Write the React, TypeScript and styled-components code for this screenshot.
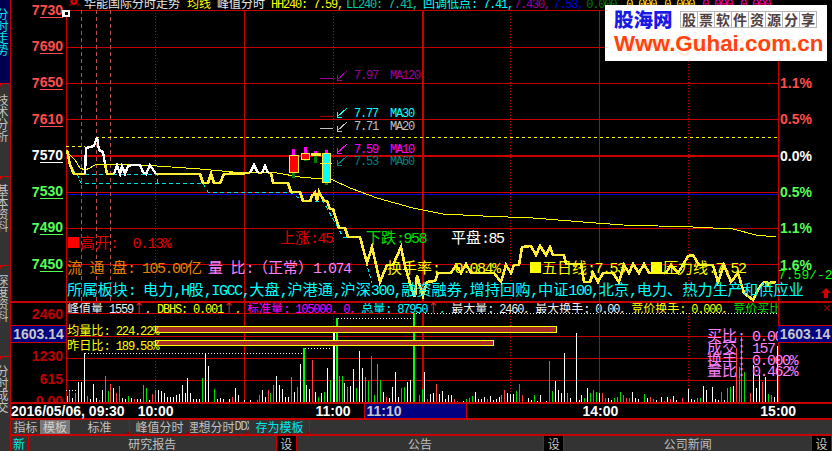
import React from "react";
import styled, { createGlobalStyle } from "styled-components";

const RED = "#c80000";
const CJK = '"Noto Sans CJK SC", "Liberation Sans", sans-serif';

const Global = createGlobalStyle`
  html, body { margin: 0; padding: 0; background: #000; }
  #root { width: 832px; height: 451px; overflow: hidden; }
`;

const Root = styled.div`
  position: relative;
  width: 832px;
  height: 451px;
  display: flex;
  overflow: hidden;
  background: #000;
  font-family: ${CJK};
  color: #fff;
`;

/* ---------- mixed width text: ASCII is half of the CJK em ---------- */
const LatinRun = styled.span`
  font-family: "Liberation Mono", monospace;
  font-size: 1em;
  letter-spacing: -0.1em;
`;
const Mix = ({ t }: { t: string }) => (
  <>
    {t.split(/([\x00-\x7f]+)/).map((part, i) =>
      /^[\x00-\x7f]+$/.test(part) ? <LatinRun key={i}>{part}</LatinRun> : part
    )}
  </>
);

/* ---------- sidebar ---------- */
const Sidebar = styled.div`
  width: 11px;
  flex: none;
  box-sizing: border-box;
  border-right: 1px solid ${RED};
  display: flex;
  flex-direction: column;
`;
const SideTab = styled.div<{ $h: number; $active?: boolean; $pad: number }>`
  position: relative;
  height: ${(p) => p.$h}px;
  flex: none;
  box-sizing: border-box;
  padding-top: ${(p) => p.$pad}px;
  overflow: hidden;
  background: ${(p) => (p.$active ? "#000050" : "#333333")};
  color: ${(p) => (p.$active ? "#00e8e8" : "#c4c4c4")};
  ${(p) => !p.$active && `border-top: 1px solid ${RED};`}
  ${(p) =>
    !p.$active &&
    `&::before { content: ""; position: absolute; left: 0; top: 0; border-top: 3px solid ${RED}; border-right: 3px solid transparent; }`}
`;
const SideText = styled.div`
  writing-mode: vertical-rl;
  text-orientation: upright;
  font-size: 12px;
  line-height: 12px;
  width: 12px;
  margin-left: -4px;
`;

/* ---------- main ---------- */
const Main = styled.div`
  flex: 1;
  min-width: 0;
  display: flex;
  flex-direction: column;
`;
const PriceRow = styled.div`
  height: 301px;
  flex: none;
  display: flex;
`;
const LeftAxis = styled.div`
  width: 55px;
  flex: none;
  box-sizing: border-box;
  display: flex;
  flex-direction: column;
`;
const AxisTick = styled.div<{ $c: string }>`
  height: 36.3px;
  flex: none;
  display: flex;
  align-items: center;
  justify-content: flex-end;
  padding-right: 3px;
  font: bold 14px/14px "Liberation Sans", sans-serif;
  color: ${(p) => p.$c};
  &:first-child { margin-top: -8px; }
`;
const Under = styled.span`
  border-bottom: 1px solid currentColor;
`;
const Plot = styled.div`
  width: 712px;
  flex: none;
  display: flex;
  flex-direction: column;
`;
const TitleRow = styled.div`
  height: 10px;
  flex: none;
  padding-left: 3px;
  display: flex;
  overflow: hidden;
  white-space: pre;
  font-size: 12px;
  line-height: 12px;
`;
const TitleIcon = styled.svg`
  flex: none;
  margin-right: 5px;
  display: block;
`;
const TitleItem = styled.span<{ $c: string; $gap?: number }>`
  color: ${(p) => p.$c};
  margin-left: ${(p) => p.$gap ?? 0}px;
  margin-top: -3px;
  flex: none;
`;
const Canvas = styled.div`
  position: relative;
  flex: 1;
`;
const ChartSvg = styled.svg`
  position: absolute;
  left: 0;
  top: 0;
  display: block;
  overflow: visible;
`;
const Tag = styled.div<{ $x: number; $y: number; $ox: number; $oy: number; $c: string; $s?: number }>`
  position: absolute;
  left: ${(p) => p.$x - p.$ox}px;
  top: ${(p) => p.$y - p.$oy}px;
  transform: translateY(-50%);
  color: ${(p) => p.$c};
  font-size: ${(p) => p.$s ?? 15}px;
  line-height: 1;
  white-space: pre;
`;
const SmallSquare = styled.span<{ $c: string }>`
  display: inline-block;
  width: 11px;
  height: 11px;
  margin-right: 1px;
  background: ${(p) => p.$c};
`;
const RightAxis = styled.div`
  flex: 1;
  padding-top: 65px;
  display: flex;
  flex-direction: column;
  margin-left: 0;
`;
const PctTick = styled.div<{ $c: string }>`
  height: 36.3px;
  flex: none;
  display: flex;
  align-items: center;
  padding-left: 2px;
  font: bold 14px/14px "Liberation Sans", sans-serif;
  color: ${(p) => p.$c};
`;
const LastPrice = styled.div`
  margin-top: -14px;
  color: #00ff00;
  font: 13px/14px "Liberation Mono", monospace;
  white-space: pre;
`;
const UpArrow = styled.svg`
  display: block;
  margin: 5px 0 0 43px;
`;

/* ---------- volume ---------- */
const VolRow = styled.div`
  height: 101px;
  flex: none;
  box-sizing: border-box;
  border-top: 2px solid ${RED};
  display: flex;
`;
const VolAxis = styled.div<{ $right?: boolean }>`
  width: ${(p) => (p.$right ? 54 : 55)}px;
  flex: none;
  box-sizing: border-box;
  overflow: hidden;
  display: flex;
  flex-direction: column;
  ${(p) => p.$right && "position: relative; z-index: 1;"}
`;
const VolTick = styled.div<{ $h: number }>`
  height: ${(p) => p.$h}px;
  flex: none;
  display: flex;
  align-items: center;
  justify-content: flex-end;
  padding-right: 3px;
  font: bold 14px/14px "Liberation Sans", sans-serif;
  color: #c00000;
`;
const ValueBox = styled.div`
  height: 18px;
  flex: none;
  box-sizing: border-box;
  border-top: 1px solid ${RED};
  border-bottom: 1px solid ${RED};
  background: #000080;
  color: #c8c8c8;
  display: flex;
  align-items: center;
  justify-content: center;
  font: bold 14px/14px "Liberation Sans", sans-serif;
`;
const CloseMark = styled.div`
  height: 22px;
  flex: none;
  box-sizing: border-box;
  padding: 0 1px 0 0;
  text-align: right;
  color: #900000;
  font: 14px/11px "Liberation Sans", sans-serif;
`;
const VolPlot = styled.div`
  width: 712px;
  flex: none;
  display: flex;
  flex-direction: column;
`;
const VolHeader = styled.div`
  height: 10px;
  flex: none;
  padding-left: 1px;
  display: flex;
  overflow: hidden;
  white-space: pre;
  font-size: 12px;
  line-height: 12px;
`;
const HeaderItem = styled.span<{ $c: string }>`
  color: ${(p) => p.$c};
  flex: none;
  margin-top: -1px;
`;
const UpTick = styled.span`
  color: #ff3030;
`;

/* ---------- time axis ---------- */
const TimeRow = styled.div`
  height: 16px;
  flex: none;
  box-sizing: border-box;
  border-top: 2px solid ${RED};
  display: flex;
  align-items: center;
  position: relative;
  font: bold 14px/14px "Liberation Sans", sans-serif;
  white-space: pre;
`;
const TimeLabel = styled.span<{ $gap: number }>`
  margin-left: ${(p) => p.$gap}px;
  flex: none;
`;
const TimeCursor = styled.span`
  margin-left: 13px;
  width: 103px;
  height: 100%;
  flex: none;
  box-sizing: border-box;
  padding-left: 2px;
  display: flex;
  align-items: center;
  background: #000080;
  color: #c8c8c8;
  border-left: 1px solid ${RED};
  border-right: 1px solid ${RED};
`;

/* ---------- tool row ---------- */
const ToolRow = styled.div`
  height: 16px;
  flex: none;
  box-sizing: border-box;
  border-top: 2px solid ${RED};
  background: #333333;
  display: flex;
  font-size: 12px;
  white-space: nowrap;
`;
const ToolBtn = styled.div<{ $w: number; $c?: string; $sel?: boolean; $edge?: boolean }>`
  position: relative;
  width: ${(p) => p.$w}px;
  flex: none;
  box-sizing: border-box;
  display: flex;
  align-items: center;
  justify-content: center;
  overflow: hidden;
  line-height: 14px;
  color: ${(p) => p.$c ?? "#c0c0c0"};
  background: ${(p) => (p.$sel ? "#777777" : "transparent")};
  ${(p) => p.$edge && `border-right: 1px solid ${RED};`}
  ${(p) =>
    p.$edge &&
    `&::after { content: ""; position: absolute; right: 0; bottom: 0; border-bottom: 3px solid #900000; border-left: 3px solid transparent; }`}
`;

/* ---------- bottom tabs ---------- */
const BottomRow = styled.div`
  flex: 1;
  box-sizing: border-box;
  border-top: 2px solid ${RED};
  background: #333333;
  display: flex;
  overflow: hidden;
  font-size: 12px;
  line-height: 16px;
`;
const NewBtn = styled.div`
  width: 18px;
  flex: none;
  box-sizing: border-box;
  border-right: 1px solid ${RED};
  padding-left: 2px;
  color: #00e8e8;
`;
const BottomTab = styled.div`
  flex: 1;
  text-align: center;
  color: #c0c0c0;
`;
const SetBtn = styled.div`
  width: 21px;
  flex: none;
  text-align: center;
  background: #000;
  color: #c8c8c8;
  border-left: 1px solid ${RED};
  border-right: 1px solid ${RED};
  box-sizing: border-box;
`;

/* ---------- logo overlay ---------- */
const Logo = styled.div`
  position: absolute;
  z-index: 2;
  left: 605px;
  top: 5px;
  width: 222px;
  height: 56px;
  box-sizing: border-box;
  padding: 3px 0 0 9px;
  background: #fff;
  display: flex;
  flex-direction: column;
  overflow: hidden;
`;
const LogoTop = styled.div`
  position: relative;
  display: flex;
  align-items: center;
`;
const LogoName = styled.span`
  color: #1a1ae6;
  font-size: 19.5px;
  line-height: 22px;
  font-weight: 900;
  width: 67px;
  flex: none;
`;
const LogoCell = styled.span`
  width: 18px;
  height: 17px;
  flex: none;
  box-sizing: border-box;
  border: 1px solid #b8b8b8;
  margin-left: -1px;
  text-align: center;
  font-size: 14px;
  line-height: 15px;
  font-weight: 700;
  color: #504040;
`;
const LogoUrl = styled.div`
  position: relative;
  color: #ff4210;
  font: bold 22.4px/26px "Liberation Sans", sans-serif;
  white-space: nowrap;
  margin-top: 1px;
`;
const LogoGhost = styled.div`
  position: absolute;
  left: 16px;
  top: 27px;
  color: #ffeedd;
  font: bold 22px/24px "Liberation Sans", sans-serif;
  white-space: nowrap;
`;

/* ---------- data ---------- */
const Y = "#ffee33";
const thickYellow: number[][][] = [
  [[67, 150], [70, 165], [74, 174], [85, 174]],
  [[105, 164], [107, 174], [114, 174]],
  [[156, 174], [200, 174], [203, 183], [208, 183], [211, 174], [214, 183], [220, 183], [224, 174], [250, 173]],
  [[258, 173], [262, 173]],
  [[268, 173], [271, 173], [273, 183], [288, 183], [291, 192], [300, 192], [303, 201], [310, 201], [313, 194]],
  [[324, 201], [327, 201], [330, 209], [333, 209], [339, 228], [345, 228], [348, 237], [360, 237], [367, 263], [372, 247], [380, 282], [387, 265], [393, 265], [401, 247], [405, 266], [412, 290], [415, 297], [417, 275], [421, 290], [423, 296], [427, 282], [435, 281], [438, 273], [451, 273], [456, 265], [461, 273], [466, 264], [471, 273], [494, 273], [501, 282], [506, 265], [511, 273], [514, 265], [519, 265], [522, 247], [531, 246], [536, 255], [540, 246], [546, 255], [550, 247], [553, 255], [564, 255], [566, 264], [581, 264], [584, 282], [590, 282], [593, 273], [598, 282], [603, 273], [613, 273], [619, 282], [624, 265], [629, 273], [633, 264], [639, 273], [644, 264], [649, 273], [666, 273], [671, 265], [678, 273], [683, 265], [688, 256], [693, 255], [699, 265], [713, 265], [718, 282], [724, 265], [731, 282], [738, 273], [744, 293], [753, 300], [759, 288], [764, 282], [769, 283], [776, 282]],
];
const whiteLine: number[][][] = [
  [[85, 174], [86, 148], [94, 146], [97, 137], [99, 150], [103, 152], [105, 164]],
  [[114, 174], [117, 165], [120, 174], [122, 166], [125, 174], [128, 166], [132, 165], [140, 165], [143, 172], [146, 174], [150, 165], [156, 174]],
  [[250, 173], [254, 165], [258, 173]],
  [[262, 173], [265, 166], [268, 173]],
];
const avgLine = [[67, 150], [68, 153], [75, 160], [80, 168], [85, 170], [90, 168], [95, 165], [107, 164], [157, 166], [200, 169], [233, 172], [277, 173], [300, 177], [333, 180], [350, 188], [377, 198], [413, 208], [423, 210], [443, 214], [483, 216], [533, 218], [583, 222], [623, 225], [693, 227], [733, 229], [756, 235], [776, 237]];
const cyanLine = [[68, 163], [78, 176], [81, 183], [200, 183], [203, 183], [208, 192], [290, 192], [303, 201], [323, 201], [338, 228], [343, 237], [360, 237], [367, 265], [372, 283]];
const cyanTop = [[85, 174], [157, 174], [158, 183]];
const pts = (a: number[][]) => a.map((p) => p.join(",")).join(" ");

type Bar = [number, string, number];
const z5: Bar[] = [[200,"w",288],[208,"g",270],[217,"w",293],[226,"g",280],[235,"w",247],[244,"w",245],[253,"w",160],[262,"r",288],[271,"w",298],[280,"w",252],[289,"w",295],[298,"g",300],[307,"w",270],[316,"g",228],[325,"g",272],[331,"r",252],[340,"w",265],[349,"r",280],[358,"g",258],[367,"w",295],[376,"w",296],[385,"g",288],[394,"w",295],[403,"r",298],[412,"w",296],[421,"w",298],[430,"g",255],[439,"g",265],[448,"w",300],[457,"r",282],[466,"g",270],[475,"w",270],[484,"w",272],[493,"w",280],[502,"w",292],[511,"w",290],[520,"w",292],[529,"w",285],[538,"w",283],[547,"w",255],[556,"w",280],[562,"w",233],[571,"w",278],[580,"w",298],[589,"w",296],[598,"w",296],[607,"g",234],[616,"w",160],[625,"w",198],[643,"g",266],[652,"w",296],[661,"w",295],[670,"w",298],[688,"w",298],[697,"r",290],[706,"w",265],[715,"w",285],[733,"w",300],[751,"w",300],[770,"g",300],[778,"r",285],[787,"w",270],[796,"w",290],[805,"r",270],[811,"g",280],[820,"g",255],[829,"w",228],[838,"w",255],[847,"w",268],[856,"w",292],[865,"w",290],[874,"g",230],[883,"w",275],[892,"g",260],[901,"w",192],[910,"G",145],[919,"w",255],[928,"w",268],[937,"r",180],[946,"w",275],[955,"g",290],[964,"w",278],[973,"g",275],[982,"w",205],[991,"g",240],[998,"W",97],[1007,"G",55],[1018,"g",228],[1027,"g",228],[1033,"w",250],[1042,"g",262],[1051,"w",258],[1060,"w",207],[1069,"g",265],[1078,"w",153],[1087,"w",205],[1096,"g",232],[1105,"g",242],[1114,"r",168],[1123,"g",285],[1132,"g",192],[1141,"g",240],[1150,"w",275],[1159,"r",290],[1168,"w",295],[1177,"w",262],[1186,"w",216],[1195,"w",290],[1204,"r",265],[1213,"g",262],[1222,"w",245],[1231,"w",240],[1240,"G",40]];
const z6: Bar[] = [[10,"r",285],[18,"g",267],[25,"w",217],[33,"r",298],[43,"w",283],[52,"w",280],[61,"r",252],[70,"w",282],[79,"w",272],[88,"w",298],[97,"w",285],[106,"w",285],[115,"r",298],[124,"r",302],[142,"w",302],[151,"g",298],[160,"r",295],[169,"g",288],[178,"w",276],[187,"w",298],[196,"w",298],[205,"w",290],[214,"r",298],[223,"w",288],[232,"w",300],[241,"w",298],[250,"w",292],[256,"g",285],[265,"r",270],[274,"w",278],[283,"w",282],[292,"w",282],[301,"g",273],[310,"r",252],[319,"r",285],[337,"w",295],[346,"w",300],[355,"g",285],[364,"w",302],[373,"w",285],[391,"w",302],[400,"r",183],[409,"g",273],[418,"w",243],[427,"w",270],[436,"w",280],[445,"w",160],[454,"g",280],[463,"w",295],[481,"w",99],[490,"w",300],[496,"w",285],[505,"g",295],[514,"w",265],[523,"g",280],[532,"r",270],[541,"g",275],[550,"w",278],[559,"r",280],[568,"r",295],[577,"w",295],[586,"w",300],[595,"g",295],[604,"g",290],[613,"g",277],[622,"r",285],[631,"r",295],[640,"g",293],[649,"w",277],[658,"w",295],[667,"w",298],[685,"g",283],[694,"w",295],[703,"r",292],[712,"g",298],[721,"w",300],[736,"w",292],[745,"r",302],[754,"w",290],[763,"r",298],[772,"w",287],[781,"w",300],[799,"r",295],[817,"w",268],[826,"w",298],[835,"w",300],[844,"g",295],[853,"g",295],[862,"w",258],[871,"w",270],[889,"w",262],[898,"w",298],[907,"w",300],[916,"r",275],[925,"w",300],[934,"g",265],[943,"g",262],[952,"w",258],[961,"r",145],[968,"g",200],[976,"g",110],[985,"g",215],[1003,"r",280],[1012,"w",195],[1021,"w",265],[1030,"w",225],[1039,"r",245],[1048,"w",232],[1057,"g",283],[1066,"r",285],[1075,"w",290],[1084,"w",138]];
const volBars = [
  ...z5.map(([x, c, t]) => ({ x: Math.round(x / 3), c, top: 300 + Math.round(t / 3) })),
  ...z6.map(([x, c, t]) => ({ x: 416 + Math.round(x / 3), c, top: 300 + Math.round(t / 3) })),
];
const barColor: Record<string, string> = { w: "#ffffff", W: "#ffffff", g: "#00e000", G: "#00ff00", r: "#ff4040" };

const arrow = (x: number, y: number) =>
  `M${x + 10} ${y} L${x} ${y + 9} M${x} ${y + 4} V${y + 9} H${x + 5}`;

const maRows = [
  { y: 75, dash: 78, dashC: "#a000a0", c: "#a000a0", v: "7.97", n: "MA120", a: 71 },
  { y: 113, dash: 116, dashC: "#a00000", c: "#00ffff", v: "7.77", n: "MA30", a: 108 },
  { y: 126, dash: 128, dashC: "#c0c0c0", c: "#c0c0c0", v: "7.71", n: "MA20", a: 122 },
  { y: 149, dash: 0, dashC: "", c: "#ff00ff", v: "7.59", n: "MA10", a: 144 },
  { y: 161, dash: 0, dashC: "", c: "#008080", v: "7.53", n: "MA60", a: 156 },
];

const candles = [
  { x: 289, w: 9, t: 155, b: 172, fill: "#ff0000", wt: 149, wb: 178 },
  { x: 301, w: 8, t: 153, b: 159, fill: "#ff0000", wt: 147, wb: 161 },
  { x: 311, w: 9, t: 153, b: 155, fill: Y, wt: 151, wb: 163 },
  { x: 322, w: 8, t: 153, b: 182, fill: "#00ffff", wt: 150, wb: 185 },
];

const PriceChart = () => (
  <ChartSvg width={712} height={291} viewBox="66 10 712 291" shapeRendering="crispEdges">
    {[10, 47, 83, 119, 192, 228, 264].map((y) => (
      <line key={y} x1={66} x2={778} y1={y + 0.5} y2={y + 0.5} stroke={RED} />
    ))}
    <line x1={66} x2={778} y1={155.5} y2={155.5} stroke={RED} strokeWidth={2} />
    <line x1={66} x2={778} y1={194.5} y2={194.5} stroke="#0000d8" />
    {[66, 244, 599, 778].map((x) => (
      <line key={x} x1={x + 0.5} x2={x + 0.5} y1={10} y2={301} stroke={RED} />
    ))}
    <line x1={423} x2={423} y1={10} y2={301} stroke={RED} strokeWidth={2} />
    {[155, 333, 510, 688].map((x) => (
      <line key={x} x1={x + 0.5} x2={x + 0.5} y1={10} y2={301} stroke={RED} strokeDasharray="1 2" />
    ))}
    {[81, 96, 110].map((x) => (
      <line key={x} x1={x + 0.5} x2={x + 0.5} y1={10} y2={301} stroke="#b05050" strokeDasharray="4 3" />
    ))}
    <line x1={96} x2={778} y1={137.5} y2={137.5} stroke="#ffff00" strokeDasharray="3 3" />
    <line x1={66} x2={85} y1={146.5} y2={146.5} stroke="#ffff00" strokeDasharray="3 3" />
    <polyline points={pts(cyanLine)} fill="none" stroke="#00e0e0" strokeDasharray="4 3" />
    <polyline points={pts(cyanTop)} fill="none" stroke="#00e0e0" strokeDasharray="4 3" />
    <polyline points={pts(avgLine)} fill="none" stroke="#ffff00" />
    {thickYellow.map((s, i) => (
      <polyline key={i} points={pts(s)} fill="none" stroke={Y} strokeWidth={2.6} />
    ))}
    {whiteLine.map((s, i) => (
      <polyline key={i} points={pts(s)} fill="none" stroke="#fff" strokeWidth={2.4} />
    ))}
    <polyline points="313,194 315,192 317,201 319,192 324,201" fill="none" stroke={Y} strokeWidth={2.6} />
    {candles.map((c) => (
      <g key={c.x}>
        <rect x={c.x + c.w / 2 - 1.5} y={c.wt} width={3} height={c.t - c.wt} fill="#ff00ff" />
        <rect x={c.x + c.w / 2 - 1.5} y={c.b} width={3} height={c.wb - c.b} fill="#008000" />
        <rect x={c.x + 0.5} y={c.t + 0.5} width={c.w} height={c.b - c.t} fill={c.fill} stroke={Y} />
      </g>
    ))}
    <line x1={320} x2={332} y1={163.5} y2={163.5} stroke={Y} />
    {maRows.map((m) => (
      <g key={m.n}>
        {m.dash > 0 && <line x1={320} x2={333} y1={m.dash + 0.5} y2={m.dash + 0.5} stroke={m.dashC} />}
        <path d={arrow(337, m.a)} fill="none" stroke={m.c} />
      </g>
    ))}
    <rect x={766} y={284} width={3} height={3} fill={Y} />
    {/* marker at the chart's top left corner */}
    <rect x={62} y={10} width={8} height={7} fill="#fff" />
    <rect x={64.5} y={12} width={3} height={3} fill="#000" />
  </ChartSvg>
);

const VolChart = () => (
  <ChartSvg width={712} height={89} viewBox="66 313 712 89" shapeRendering="crispEdges">
    <line x1={66} x2={416} y1={313.5} y2={313.5} stroke={RED} />
    <line x1={416} x2={778} y1={313.5} y2={313.5} stroke="#fff" strokeDasharray="1 2" />
    {[336, 358, 380].map((y) => (
      <line key={y} x1={66} x2={778} y1={y + 0.5} y2={y + 0.5} stroke={RED} />
    ))}
    {[66, 244, 599, 778].map((x) => (
      <line key={x} x1={x + 0.5} x2={x + 0.5} y1={303} y2={402} stroke={RED} />
    ))}
    <line x1={423} x2={423} y1={313} y2={402} stroke={RED} strokeWidth={2} />
    {[155, 333, 510, 688].map((x) => (
      <line key={x} x1={x + 0.5} x2={x + 0.5} y1={313} y2={402} stroke={RED} strokeDasharray="1 2" />
    ))}
    {volBars.map((b, i) => {
      const thick = b.c === "G" || b.c === "W";
      return (
        <rect key={i} x={b.x} y={b.top} width={thick ? 2 : 1} height={402 - b.top} fill={barColor[b.c]} />
      );
    })}
    <line x1={85} x2={302} y1={353.5} y2={353.5} stroke="#fff" strokeDasharray="1 2" />
    <line x1={305} x2={332} y1={348.5} y2={348.5} stroke="#fff" strokeDasharray="1 2" />
    <line x1={338} x2={416} y1={318.5} y2={318.5} stroke="#fff" strokeDasharray="1 2" />
    <line x1={66} x2={77} y1={390.5} y2={390.5} stroke="#fff" strokeDasharray="1 2" />
    <rect x={155.5} y={326.5} width={401} height={6} fill="#a52a2a" stroke="#ffff00" />
    <rect x={155.5} y={340.5} width={338} height={5} fill="#a52a2a" stroke="#ffff00" />
  </ChartSvg>
);

const PriceTag = (p: { x: number; y: number; c: string; s?: number; children: React.ReactNode }) => (
  <Tag $x={p.x} $y={p.y} $ox={66} $oy={10} $c={p.c} $s={p.s}>
    {p.children}
  </Tag>
);
const VolTag = (p: { x: number; y: number; c: string; s?: number; children: React.ReactNode }) => (
  <Tag $x={p.x} $y={p.y} $ox={66} $oy={313} $c={p.c} $s={p.s}>
    {p.children}
  </Tag>
);

const sideTabs = [
  { h: 83, active: true, pad: 8, t: "分时走势" },
  { h: 93, pad: 10, t: "技术分析" },
  { h: 89, pad: 7, t: "基本资料" },
  { h: 91, pad: 8, t: "深度资料" },
  { h: 95, pad: 8, t: "分时成交" },
];
const priceTicks = [
  ["7", "730", "#ff4d4d"], ["7", "690", "#ff4d4d"], ["7", "650", "#ff4d4d"], ["7", "610", "#ff4d4d"],
  ["7", "570", "#ffffff"], ["7", "530", "#55ff55"], ["7", "490", "#55ff55"], ["7", "450", "#55ff55"],
];
const pctTicks = [
  ["1.1%", "#ff4d4d"], ["0.5%", "#ff4d4d"], ["0.0%", "#ffffff"], ["0.5%", "#55ff55"], ["1.1%", "#55ff55"], ["1.6%", "#55ff55"],
];
const logoCells = "股票软件资源分享".split("");

export default function App() {
  return (
    <Root>
      <Global />
      <Sidebar>
        {sideTabs.map((s) => (
          <SideTab key={s.t} $h={s.h} $active={s.active} $pad={s.pad}>
            <SideText>{s.t}</SideText>
          </SideTab>
        ))}
      </Sidebar>
      <Main>
        <PriceRow>
          <LeftAxis>
            {priceTicks.map(([a, b, c]) => (
              <AxisTick key={b} $c={c}>
                {a}
                <Under>{b}</Under>
              </AxisTick>
            ))}
          </LeftAxis>
          <Plot>
            <TitleRow>
              <TitleIcon width={10} height={10} viewBox="0 0 10 10">
                <circle cx="5" cy="1.5" r="3.5" fill="#e00000" />
                <circle cx="5" cy="1.5" r="1.3" fill="#000" />
                <path d="M0 5h2M8 5h2" stroke="#e00000" />
              </TitleIcon>
              <TitleItem $c="#e8e8e8"><Mix t="华能国际分时走势" /></TitleItem>
              <TitleItem $c="#ffff00" $gap={7}>均线</TitleItem>
              <TitleItem $c="#e8e8e8" $gap={6}>峰值分时</TitleItem>
              <TitleItem $c="#ffff00" $gap={6}><Mix t="HH240: 7.59," /></TitleItem>
              <TitleItem $c="#00c8a0" $gap={3}><Mix t="LL240: 7.41," /></TitleItem>
              <TitleItem $c="#00ffff" $gap={5}><Mix t="回调低点: 7.41," /></TitleItem>
              <TitleItem $c="#a000a0" $gap={1}><Mix t="7.430," /></TitleItem>
              <TitleItem $c="#0000e0" $gap={3}><Mix t="7.53," /></TitleItem>
              <TitleItem $c="#008000" $gap={3}><Mix t="0.000," /></TitleItem>
              <TitleItem $c="#ffff00" $gap={4}><Mix t="0.000," /></TitleItem>
              <TitleItem $c="#ffff00" $gap={2}><Mix t="0.000," /></TitleItem>
              <TitleItem $c="#ff00ff" $gap={2}><Mix t="0.000," /></TitleItem>
              <TitleItem $c="#ff00ff" $gap={2}><Mix t="0.000" /></TitleItem>
            </TitleRow>
            <Canvas>
              <PriceChart />
              {maRows.map((m) => (
                <React.Fragment key={m.n}>
                  <PriceTag x={354} y={m.y} c={m.c} s={12}><Mix t={m.v} /></PriceTag>
                  <PriceTag x={390} y={m.y} c={m.c} s={12}><Mix t={m.n} /></PriceTag>
                </React.Fragment>
              ))}
              <PriceTag x={68} y={243} c="#e00000"><SmallSquare $c="#ff0000" />高开<Mix t=":  0.13%" /></PriceTag>
              <PriceTag x={280} y={238} c="#e00000">上涨<Mix t=":45" /></PriceTag>
              <PriceTag x={366} y={238} c="#00e000">下跌<Mix t=":958" /></PriceTag>
              <PriceTag x={451} y={238} c="#ffffff">平盘<Mix t=":85" /></PriceTag>
              <PriceTag x={67} y={268} c="#e88000"><Mix t="流 通 盘: 105.00亿" /></PriceTag>
              <PriceTag x={208} y={268} c="#ff80ff"><Mix t="量 比:（正常）1.074" /></PriceTag>
              <PriceTag x={387} y={268} c="#ffff00"><Mix t="换手率:  0.084%" /></PriceTag>
              <PriceTag x={530} y={268} c="#ffff00"><SmallSquare $c="#ffff00" />五日线<Mix t=":7.53" /></PriceTag>
              <PriceTag x={651} y={268} c="#ffff00"><SmallSquare $c="#ffff00" />压力线<Mix t=":7.52" /></PriceTag>
              <PriceTag x={67} y={290} c="#00ffff" s={15.2}>
                <Mix t="所属板块: 电力,H股,IGCC,大盘,沪港通,沪深300,融资融券,增持回购,中证100,北京,电力、热力生产和供应业" />
              </PriceTag>
            </Canvas>
          </Plot>
          <RightAxis>
            {pctTicks.map(([t, c], i) => (
              <PctTick key={i} $c={c}>{t}</PctTick>
            ))}
            <LastPrice>7.59/-2</LastPrice>
            <UpArrow width={10} height={10} viewBox="0 0 10 10">
              <path d="M5 0 L10 5 H7 V10 H3 V5 H0 Z" fill="#d00000" />
            </UpArrow>
          </RightAxis>
        </PriceRow>

        <VolRow>
          <VolAxis>
            <VolTick $h={22}>2460</VolTick>
            <ValueBox>1603.14</ValueBox>
            <VolTick $h={25}>1230</VolTick>
            <VolTick $h={22}>615</VolTick>
            <VolTick $h={22}>0.00</VolTick>
          </VolAxis>
          <VolPlot>
            <VolHeader>
              <HeaderItem $c="#f0f0f0"><Mix t="峰值量 1559" /><UpTick>↑</UpTick><Mix t=", " /></HeaderItem>
              <HeaderItem $c="#ffff00"><Mix t="DBHS: 0.001" /><UpTick>↑</UpTick><Mix t=", " /></HeaderItem>
              <HeaderItem $c="#ff00ff"><Mix t="标准量: 105000, 0, " /></HeaderItem>
              <HeaderItem $c="#00ffff"><Mix t="总量: 87950" /><UpTick>↑</UpTick><Mix t=", " /></HeaderItem>
              <HeaderItem $c="#f0f0f0"><Mix t="最大量: 2460, 最大换手: 0.00, " /></HeaderItem>
              <HeaderItem $c="#ffff00"><Mix t="竞价换手: 0.000, " /></HeaderItem>
              <HeaderItem $c="#00e000"><Mix t="竞价买比: 0," /></HeaderItem>
            </VolHeader>
            <Canvas>
              <VolChart />
              <VolTag x={67} y={331} c="#ffff00" s={12.2}><Mix t="均量比: 224.22%" /></VolTag>
              <VolTag x={67} y={346} c="#ffff00" s={12.2}><Mix t="昨日比: 189.58%" /></VolTag>
              <VolTag x={707} y={336} c="#ff80ff"><Mix t="买比: 0.00" /></VolTag>
              <VolTag x={707} y={348} c="#ff80ff"><Mix t="成交: 157" /></VolTag>
              <VolTag x={707} y={360} c="#ff80ff"><Mix t="换手: 0.000%" /></VolTag>
              <VolTag x={707} y={371} c="#ff80ff"><Mix t="量比: 0.462%" /></VolTag>
            </Canvas>
          </VolPlot>
          <VolAxis $right>
            <CloseMark>×</CloseMark>
            <ValueBox>1603.14</ValueBox>
          </VolAxis>
        </VolRow>

        <TimeRow>
          <TimeLabel $gap={0}>2016/05/06, 09:30</TimeLabel>
          <TimeLabel $gap={13}>10:00</TimeLabel>
          <TimeLabel $gap={142}>11:00</TimeLabel>
          <TimeCursor>11:10</TimeCursor>
          <TimeLabel $gap={116}>14:00</TimeLabel>
          <TimeLabel $gap={142}>15:00</TimeLabel>
        </TimeRow>

        <ToolRow>
          <ToolBtn $w={29}>指标</ToolBtn>
          <ToolBtn $w={30} $sel $c="#d0d0d0">模板</ToolBtn>
          <ToolBtn $w={60} $edge>标准</ToolBtn>
          <ToolBtn $w={60} $edge>峰值分时</ToolBtn>
          <ToolBtn $w={60} $edge><Mix t="理想分时DDX" /></ToolBtn>
          <ToolBtn $w={60} $edge $c="#00e8e8">存为模板</ToolBtn>
        </ToolRow>

        <BottomRow>
          <NewBtn>新</NewBtn>
          <BottomTab>研究报告</BottomTab>
          <SetBtn>设</SetBtn>
          <BottomTab>公告</BottomTab>
          <SetBtn>设</SetBtn>
          <BottomTab>公司新闻</BottomTab>
          <SetBtn>设</SetBtn>
        </BottomRow>
      </Main>

      <Logo>
        <LogoGhost>www.gszx.com.cn</LogoGhost>
        <LogoTop>
          <LogoName>股海网</LogoName>
          {logoCells.map((c) => (
            <LogoCell key={c}>{c}</LogoCell>
          ))}
        </LogoTop>
        <LogoUrl>Www.Guhai.com.cn</LogoUrl>
      </Logo>
    </Root>
  );
}
